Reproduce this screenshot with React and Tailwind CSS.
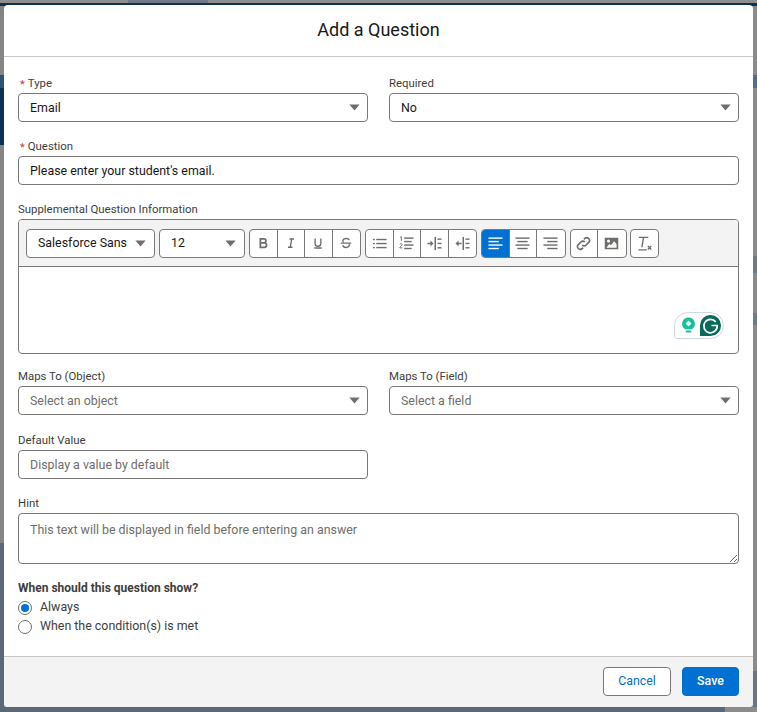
import React from 'react';

function Caret({ className = '' }) {
  return (
    <svg viewBox="0 0 11 7" className={`w-[11px] h-[7px] ${className}`} aria-hidden="true">
      <path d="M0.4 0.4h10.2L5.5 6.6z" fill="#706e6b" />
    </svg>
  );
}

function Label({ children, required }) {
  return (
    <div className="h-[19px] flex items-center pt-[1px] text-[11.4px] text-[#3e3e3c] leading-none">
      {required && <span className="text-[#c23934] mr-[3px] ml-[2px] text-[11px]">*</span>}
      {children}
    </div>
  );
}

function Select({ value, placeholder }) {
  return (
    <div className="h-[29px] flex items-center justify-between bg-white border border-[#7b7977] rounded-[4px] pl-[11px] pr-[7px] text-[12.4px]">
      <span className={`pt-[1px] ${placeholder ? 'text-[#706e6b]' : 'text-[#181818]'}`}>{value}</span>
      <Caret />
    </div>
  );
}

function TextInput({ value, placeholder }) {
  return (
    <input
      readOnly
      value={value}
      placeholder={placeholder}
      className="block w-full h-[29px] bg-white border border-[#7b7977] rounded-[4px] px-[11px] text-[12.4px] text-[#181818] placeholder:text-[#706e6b] outline-none"
    />
  );
}

const stroke = { fill: 'none', stroke: 'currentColor', strokeWidth: 1.5 };

const icons = {
  bold: <path d="M4.5 2.5h4.7a2.7 2.7 0 0 1 0 5.4H4.5zM4.5 7.9h5.4a2.9 2.9 0 0 1 0 5.8H4.5z" {...stroke} strokeWidth={2.4} />,
  italic: <path d="M6 2.6h6M4 13.6h6M9 2.6L7 13.6" {...stroke} strokeWidth={1.8} />,
  underline: (
    <g {...stroke} strokeWidth={1.8}>
      <path d="M4.2 2v6.5a3.8 3.8 0 0 0 7.6 0V2" />
      <path d="M3 14.6h10" />
    </g>
  ),
  strike: (
    <g {...stroke} strokeWidth={1.7}>
      <path d="M12.5 4.2C12 2.8 10.3 2 8 2 5.5 2 3.8 3.2 3.8 5c0 1 .5 1.7 1.2 2.2M3.6 11c.4 1.8 2.2 3 4.4 3 2.6 0 4.4-1.3 4.4-3.2 0-.6-.2-1.1-.5-1.6" />
      <path d="M1 8.2h14" />
    </g>
  ),
  ul: (
    <g fill="currentColor">
      <rect x="1" y="3" width="2" height="1.5" />
      <rect x="1" y="7.3" width="2" height="1.5" />
      <rect x="1" y="11.6" width="2" height="1.5" />
      <rect x="4.5" y="3" width="11" height="1.5" />
      <rect x="4.5" y="7.3" width="11" height="1.5" />
      <rect x="4.5" y="11.6" width="11" height="1.5" />
    </g>
  ),
  ol: (
    <g>
      <path d="M1.2 1.4l1.3-.7v4.6M.9 8.8c.3-.9 2.5-1 2.5.3 0 1.1-2.5 2.2-2.6 3.6h2.8" fill="none" stroke="currentColor" strokeWidth="1" />
      <g fill="currentColor">
        <rect x="5.5" y="1.5" width="10" height="1.5" />
        <rect x="5.5" y="5.2" width="8" height="1.5" />
        <rect x="5.5" y="8.9" width="10" height="1.5" />
        <rect x="5.5" y="12.6" width="8" height="1.5" />
      </g>
    </g>
  ),
  indent: (
    <g fill="currentColor">
      <path d="M.5 7.2h3.2V4.8L7 8l-3.3 3.2V8.8H.5z" />
      <rect x="8" y="1" width="1.6" height="14" />
      <rect x="11.2" y="2.6" width="4.3" height="1.5" />
      <rect x="11.2" y="7.2" width="4.3" height="1.5" />
      <rect x="11.2" y="11.8" width="4.3" height="1.5" />
    </g>
  ),
  outdent: (
    <g fill="currentColor">
      <path d="M7 7.2H3.8V4.8L.5 8l3.3 3.2V8.8H7z" />
      <rect x="8" y="1" width="1.6" height="14" />
      <rect x="11.2" y="2.6" width="4.3" height="1.5" />
      <rect x="11.2" y="7.2" width="4.3" height="1.5" />
      <rect x="11.2" y="11.8" width="4.3" height="1.5" />
    </g>
  ),
  left: (
    <g fill="currentColor">
      <rect x=".5" y="1.5" width="15" height="1.5" />
      <rect x=".5" y="5.2" width="11" height="1.5" />
      <rect x=".5" y="8.9" width="15" height="1.5" />
      <rect x=".5" y="12.6" width="11" height="1.5" />
    </g>
  ),
  center: (
    <g fill="currentColor">
      <rect x=".5" y="1.5" width="15" height="1.5" />
      <rect x="2.5" y="5.2" width="11" height="1.5" />
      <rect x=".5" y="8.9" width="15" height="1.5" />
      <rect x="2.5" y="12.6" width="11" height="1.5" />
    </g>
  ),
  right: (
    <g fill="currentColor">
      <rect x=".5" y="1.5" width="15" height="1.5" />
      <rect x="4.5" y="5.2" width="11" height="1.5" />
      <rect x=".5" y="8.9" width="15" height="1.5" />
      <rect x="4.5" y="12.6" width="11" height="1.5" />
    </g>
  ),
  link: (
    <g {...stroke} strokeWidth={1.7}>
      <path d="M6.6 9.6a3 3 0 0 0 4.2 0l3-3a3 3 0 0 0-4.2-4.2L8.4 3.6" />
      <path d="M9.4 6.4a3 3 0 0 0-4.2 0l-3 3a3 3 0 0 0 4.2 4.2l1.2-1.2" />
    </g>
  ),
  image: <path fillRule="evenodd" fill="currentColor" d="M.8 1.8h14.4v12.4H.8zM4.8 3.8a1.6 1.6 0 1 0 0 3.2 1.6 1.6 0 0 0 0-3.2zM2.6 12.4h10.8V8.8L10.8 5.6 7.4 9.8 5.6 8.4z" />,
  clear: (
    <g>
      <path d="M2 1.5h10M7 1.5L5.2 12M1.5 14.8h9" {...stroke} />
      <path d="M11.6 10.6l3.6 3.8M15.2 10.6l-3.6 3.8" {...stroke} />
    </g>
  ),
};

function ToolGroup({ items, active, small, className = '' }) {
  return (
    <div className={`flex h-[29px] rounded-[4px] border border-[#7b7977] bg-white divide-x divide-[#7b7977] overflow-hidden ${className}`}>
      {items.map((name) => (
        <div
          key={name}
          className={`w-[27.5px] flex items-center justify-center ${active === name ? 'bg-[#0070d2] text-white' : 'text-[#706e6b]'}`}
        >
          <svg viewBox="0 0 16 16" className={small ? 'w-[12px] h-[12px]' : 'w-[15px] h-[15px]'} aria-hidden="true">
            {icons[name]}
          </svg>
        </div>
      ))}
    </div>
  );
}

function Radio({ checked, children }) {
  return (
    <div className="h-[19px] flex items-center text-[12.4px] text-[#3e3e3c]">
      <span className="w-[14px] h-[14px] rounded-full border border-[#706e6b] bg-white flex items-center justify-center mr-[8px]">
        {checked && <span className="w-[8px] h-[8px] rounded-full bg-[#0070d2]" />}
      </span>
      {children}
    </div>
  );
}

function Backdrop() {
  return (
    <div className="absolute inset-0 flex flex-col bg-[#8b8b8b]">
      <div className="h-[3px] flex">
        <div className="w-[128px] bg-[#8e8e8e]" />
        <div className="w-[80px] bg-[#6f7a86]" />
        <div className="flex-1 bg-[#8e8e8e]" />
      </div>
      <div className="h-[3px] bg-[#0e3152]" />
      <div className="flex-1 flex justify-between">
        <div className="w-[4px] flex flex-col">
          <div className="h-[69px] bg-[#858585]" />
          <div className="h-[13px] bg-[#2f526f]" />
          <div className="h-[57px] bg-[#0e3152]" />
          <div className="h-[398px] bg-[#858585]" />
          <div className="flex-1 bg-[#5b6878]" />
        </div>
        <div className="w-[4px] flex flex-col">
          <div className="h-[69px] bg-[#8b8b8b]" />
          <div className="h-[13px] bg-[#4f708c]" />
          <div className="h-[168px] bg-[#8b8b8b]" />
          <div className="h-[17px] bg-[#6f7a86]" />
          <div className="h-[40px] bg-[#8b8b8b]" />
          <div className="h-[12px] bg-[#6f7a86]" />
          <div className="flex-1 bg-[#8b8b8b]" />
          <div className="h-[36px] bg-[#6b7682]" />
        </div>
      </div>
      <div className="h-[5px] flex">
        <div className="w-[725px] bg-[#5b6878]" />
        <div className="flex-1 bg-[#8b8b8b]" />
      </div>
    </div>
  );
}

export default function App() {
  return (
    <div className="relative w-[757px] h-[712px] overflow-hidden font-['Roboto',sans-serif]">
      <Backdrop />

      <div className="absolute left-[4px] top-[5px] w-[749px] h-[702px] bg-white rounded-[4px] flex flex-col overflow-hidden">
        <div className="h-[52px] shrink-0 flex items-center justify-center pb-[2px] border-b border-[#c9c7c5] text-[18px] text-[#181818]">
          Add a Question
        </div>

        <div className="flex-1 px-[14px] pt-[17px]">
          <div className="grid grid-cols-2 gap-x-[21px]">
            <div>
              <Label required>Type</Label>
              <Select value="Email" />
            </div>
            <div>
              <Label>Required</Label>
              <Select value="No" />
            </div>
          </div>

          <div className="mt-[15px]">
            <Label required>Question</Label>
            <TextInput value="Please enter your student's email." />
          </div>

          <div className="mt-[15px]">
            <Label>Supplemental Question Information</Label>
            <div className="relative h-[135px] border border-[#7b7977] rounded-[4px] overflow-hidden">
              <div className="h-[47px] bg-[#f3f3f3] border-b border-[#7b7977] flex items-center pl-[7px]">
                <div className="w-[129px] h-[29px] bg-white border border-[#7b7977] rounded-[4px] flex items-center justify-between pl-[11px] pr-[8px] text-[12.4px] text-[#181818]">
                  Salesforce Sans
                  <Caret />
                </div>
                <div className="ml-[4px] w-[86px] h-[29px] bg-white border border-[#7b7977] rounded-[4px] flex items-center justify-between pl-[11px] pr-[8px] text-[12.4px] text-[#181818]">
                  12
                  <Caret />
                </div>
                <div className="flex gap-[4px] ml-[4px]">
                  <ToolGroup items={['bold', 'italic', 'underline', 'strike']} small />
                  <ToolGroup items={['ul', 'ol', 'indent', 'outdent']} />
                  <ToolGroup items={['left', 'center', 'right']} active="left" />
                  <ToolGroup items={['link', 'image']} />
                  <ToolGroup items={['clear']} className="-ml-[1px]" />
                </div>
              </div>

              {/* grammarly widget */}
              <div className="absolute left-[655px] top-[92px] w-[50px] h-[27px] bg-white border border-[#cfd6e0] rounded-[14px] rounded-bl-[3px] flex items-center pl-[6px] gap-[3px]">
                <svg viewBox="0 0 16 18" className="w-[15px] h-[17px]" aria-hidden="true">
                  <path d="M8 .5a6.7 6.7 0 0 0-3.6 12.4h7.2A6.7 6.7 0 0 0 8 .5z" fill="#15c39a" />
                  <rect x="5" y="14.2" width="6" height="2.2" rx="1" fill="#15c39a" />
                  <path d="M8 3.6L11 6.8 8 10 5 6.8z" fill="#fff" />
                </svg>
                <svg viewBox="0 0 24 24" className="w-[23px] h-[23px]" aria-hidden="true">
                  <path d="M12 1a11 11 0 1 1 0 22H1V12A11 11 0 0 1 12 1z" fill="#0a6a5a" />
                  <path d="M17.5 8.2A7 7 0 1 0 19 12h-6" fill="none" stroke="#fff" strokeWidth="1.8" />
                </svg>
              </div>
            </div>
          </div>

          <div className="grid grid-cols-2 gap-x-[21px] mt-[13px]">
            <div>
              <Label>Maps To (Object)</Label>
              <Select value="Select an object" placeholder />
            </div>
            <div>
              <Label>Maps To (Field)</Label>
              <Select value="Select a field" placeholder />
            </div>
          </div>

          <div className="grid grid-cols-2 gap-x-[21px] mt-[16px]">
            <div>
              <Label>Default Value</Label>
              <TextInput placeholder="Display a value by default" />
            </div>
          </div>

          <div className="mt-[15px]">
            <Label>Hint</Label>
            <textarea
              readOnly
              placeholder="This text will be displayed in field before entering an answer"
              className="block w-full h-[51px] bg-white border border-[#7b7977] rounded-[4px] px-[11px] pt-[8px] text-[12.4px] leading-[16px] placeholder:text-[#706e6b] outline-none"
            />
          </div>

          <div className="mt-[14px] h-[19px] flex items-center text-[12px] font-bold text-[#3e3e3c]">
            When should this question show?
          </div>
          <div className="mt-[1px]">
            <Radio checked>Always</Radio>
            <Radio>When the condition(s) is met</Radio>
          </div>
        </div>

        <div className="h-[51px] shrink-0 bg-[#f3f3f3] border-t border-[#c9c7c5] flex items-center justify-end pr-[14px] pb-[2px] gap-[11px]">
          <button className="w-[68px] h-[29px] pt-[1px] bg-white border border-[#7b7977] rounded-[4px] text-[12.4px] text-[#0070d2]">
            Cancel
          </button>
          <button className="w-[57px] h-[29px] pt-[1px] bg-[#0070d2] border border-[#0070d2] rounded-[4px] text-[12.4px] font-medium text-white">
            Save
          </button>
        </div>
      </div>
    </div>
  );
}
